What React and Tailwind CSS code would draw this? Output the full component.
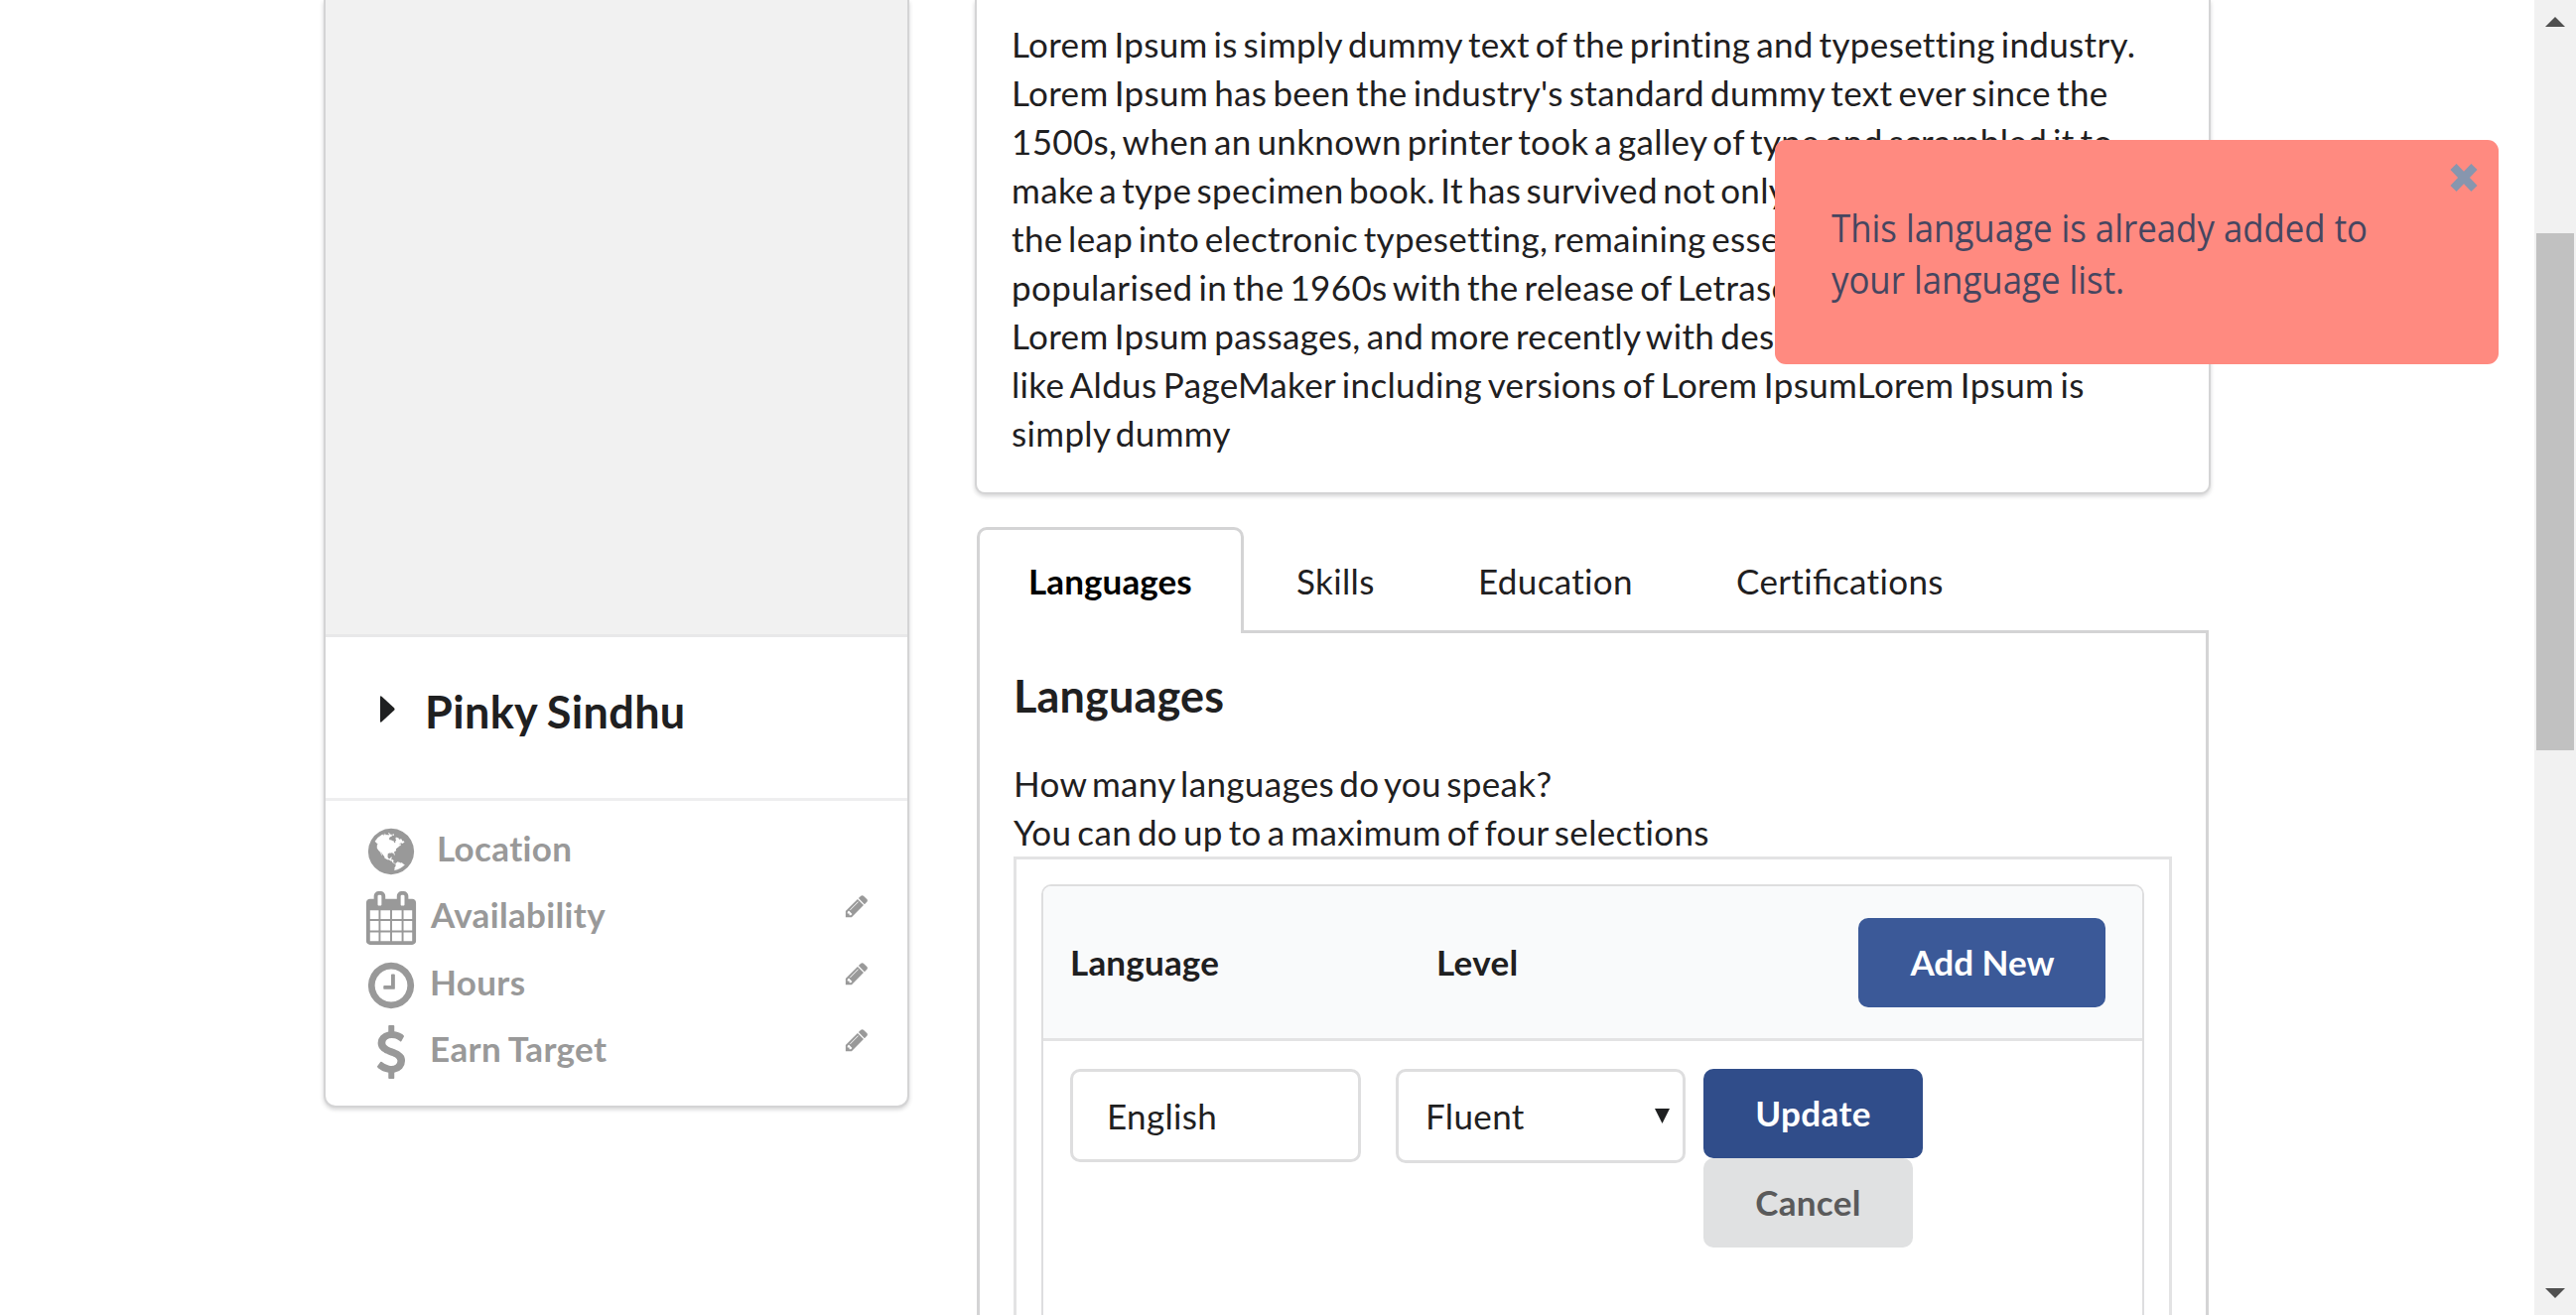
import React from "react";

const PATHS = {
  globe:
    "M896 128q209 0 385.5 103t279.5 279.5 103 385.5-103 385.5-279.5 279.5-385.5 103-385.5-103-279.5-279.5-103-385.5 103-385.5 279.5-279.5 385.5-103zm274 521q-2 1-9.5 9.5t-13.5 9.5q2 0 4.5-5t5-11 3.5-7q6-7 22-15 14-6 52-12 34-8 51 11-2-2 9.5-13t14.5-12q3-2 15-4.5t15-7.5l2-22q-12 1-17.5-7t-6.5-21q0 2-6 8 0-7-4.5-8t-11.5 1-9 1q-10-3-15-7.5t-8-16.5-4-15q-2-5-9.5-11t-9.5-10q-1-2-2.5-5.5t-3-6.5-4-5.5-5.5-2.5-7 5-7.5 10-4.5 5q-3-2-6-1.5t-4.5 1-4.5 3-5 3.5q-3 2-8.5 3t-8.5 2q15-5-1-11-10-4-16-3 9-4 7.5-12t-8.5-14h5q-1-4-8.5-8.5t-17.5-8.5-13-6q-8-5-34-9.5t-33-.5q-5 6-4.5 10.5t4 14 3.5 12.5q1 6-5.5 13t-6.5 12q0 7 14 15.5t10 21.5q-3 8-16 16t-16 12q-5 8-1.5 18.5t10.5 16.5q2 2 1.5 4t-3.5 4.5-5.5 4-6.5 3.5l-3 2q-11 5-20.5-6t-13.5-26q-7-25-16-30-23-8-29 1-5-13-41-26-25-9-58-4 6-1 0-15-7-15-19-12 3-6 4-17.5t1-13.5q3-13 12-23 1-1 7-8.5t9.5-13.5.5-6q35 4 50-11 5-5 11.5-17t10.5-17q9-6 14-5.5t14.5 5.5 14.5 5q14 1 15.5-11t-7.5-20q12 1 3-17-4-7-8-9-12-4-27 5-8 4 2 8-1-1-9.5 10.5t-16.5 17.5-16-5q-1-1-5.5-13.5t-9.5-13.5q-8 0-16 15 3-8-11-15t-24-8q19-12-8-27-7-4-20.5-5t-19.5 4q-5 7-5.5 11.5t5 8 10.5 5.5 11.5 4 8.5 3q14 10 8 14-2 1-8.5 3.5t-11.5 4.5-6 4q-3 4 0 14t-2 14q-5-5-9-17.5t-7-16.5q7 9-25 6l-10-1q-4 0-16 2t-20.5 1-13.5-8q-4-8 0-20 1-4 4-2-4-3-11-9.5t-10-8.5q-46 15-94 41 6 1 12-1 5-2 13-6.5t10-5.5q34-14 42-7l5-5q14 16 20 25-7-4-30-1-20 6-22 12 7 12 5 18-4-3-11.5-10t-14.5-11-15-5q-16 0-22 1-146 80-235 222 7 7 12 8 4 1 5 9t2.5 11 11.5-3q9 8 3 19 1-1 44 27 19 17 21 21 3 11-10 18-1-2-9-9t-9-4q-3 5 .5 18.5t10.5 12.5q-7 0-9.5 16t-2.5 35.5-1 23.5l2 1q-3 12 5.5 34.5t21.5 19.5q-13 3 20 43 6 8 8 9 3 2 12 7.5t15 10 10 10.5q4 5 10 22.5t14 23.5q-2 6 9.5 20t10.5 23q-1 0-2.5 1t-2.5 1q3 7 15.5 14t15.5 13q1 3 2 10t3 11 8 2q2-20-24-62-15-25-17-29-3-5-5.5-15.5t-4.5-14.5q2 0 6 1.5t8.5 3.5 7.5 4 2 3q-3 7 2 17.5t12 18.5 17 19 12 13q6 6 14 19.5t0 13.5q9 0 20 10.5t17 19.5q5 8 8 26t5 24q2 7 8.5 13.5t12.5 9.5l16 8 13 7q5 2 18.5 10.5t21.5 11.5q10 4 16 4t14.5-2.5 13.5-3.5q15-2 29 15t21 21q36 19 55 11-2 1 .5 7.5t8 15.5 9 14.5 5.5 8.5q5 6 18 15t18 15q6-4 7-9-3 8 7 20t18 10q14-3 14-32-31 15-49-18 0-1-2.5-5.5t-4-8.5-2.5-8.5 0-7.5 5-3q9 0 10-3.5t-2-12.5-4-13q-1-8-11-20t-12-15q-5 9-16 8t-16-9q0 1-1.5 5.5t-1.5 6.5q-13 0-15-1 1-3 2.5-17.5t3.5-22.5q1-4 5.5-12t7.5-14.5 4-12.5-4.5-9.5-17.5-2.5q-19 1-26 20-1 3-3 10.5t-5 11.5-9 7q-7 3-24 2t-24-5q-13-8-22.5-29t-9.5-37q0-10 2.5-26.5t3-25-5.5-24.5q3-2 9-9.5t10-10.5q2-1 4.5-1.5t4.5 0 4-1.5 3-6q-1-1-4-3-3-3-4-3 7 3 28.5-1.5t27.5 1.5q15 11 22-2 0-1-2.5-9.5t-.5-13.5q5 27 29 9 3 3 15.5 5t17.5 5q3 2 7 5.5t5.5 4.5 5-.5 8.5-6.5q10 14 12 24 11 40 19 44 7 3 11 2t4.5-9.5 0-14-1.5-12.5l-1-8v-18l-1-8q-15-3-18.5-12t1.5-18.5 15-18.5q1-1 8-3.5t15.5-6.5 12.5-8q21-19 15-35 7 0 11-9-1 0-5-3t-7.5-5-4.5-2q9-5 2-16 5-3 7.5-11t7.5-10q9 12 21 2 8-8 1-16 5-7 20.5-10.5t18.5-9.5q7 2 8-2t1-12 3-12q4-5 15-9t13-5l17-11q3-4 0-4 18 2 31-11 10-11-6-20 3-6-3-9.5t-15-5.5q3-1 11.5-.5t10.5-1.5q15-10-7-16-17-5-43 12zm-163 877q206-36 351-189-3-3-12.5-4.5t-12.5-3.5q-18-7-24-8 1-7-2.5-13t-8-9-12.5-8-11-7q-2-2-7-6t-7-5.5-7.5-4.5-8.5-2-10 1l-3 1q-3 1-5.5 2.5t-5.5 3-4 3 0 2.5q-21-17-36-22-5-1-11-5.5t-10.5-7-10-1.5-11.5 7q-5 5-6 15t-2 13q-7-5 0-17.5t2-18.5q-3-6-10.5-4.5t-12 4.5-11.5 8.5-9 6.5-8.5 5.5-8.5 7.5q-3 4-6 12t-5 11q-2-4-11.5-6.5t-9.5-5.5q2 10 4 35t5 38q7 31-12 48-27 25-29 40-4 22 12 26 0 7-8 20.5t-7 21.5q0 6 2 16z",
  calendar:
    "M192 1664h288v-288h-288v288zm352 0h320v-288h-320v288zm-352-352h288v-320h-288v320zm352 0h320v-320h-320v320zm-352-384h288v-288h-288v288zm736 736h320v-288h-320v288zm-384-736h320v-288h-320v288zm768 736h288v-288h-288v288zm-384-352h320v-320h-320v320zm-352-864v-288q0-13-9.5-22.5t-22.5-9.5h-64q-13 0-22.5 9.5t-9.5 22.5v288q0 13 9.5 22.5t22.5 9.5h64q13 0 22.5-9.5t9.5-22.5zm736 864h288v-320h-288v320zm-384-384h320v-288h-320v288zm384 0h288v-288h-288v288zm32-480v-288q0-13-9.5-22.5t-22.5-9.5h-64q-13 0-22.5 9.5t-9.5 22.5v288q0 13 9.5 22.5t22.5 9.5h64q13 0 22.5-9.5t9.5-22.5zm384-64v1280q0 52-38 90t-90 38h-1408q-52 0-90-38t-38-90v-1280q0-52 38-90t90-38h128v-96q0-66 47-113t113-47h64q66 0 113 47t47 113v96h384v-96q0-66 47-113t113-47h64q66 0 113 47t47 113v96h128q52 0 90 38t38 90z",
  clock:
    "M1024 544v448q0 14-9 23t-23 9h-320q-14 0-23-9t-9-23v-64q0-14 9-23t23-9h224v-352q0-14 9-23t23-9h64q14 0 23 9t9 23zm416 352q0-148-73-273t-198-198-273-73-273 73-198 198-73 273 73 273 198 198 273 73 273-73 198-198 73-273zm224 0q0 209-103 385.5t-279.5 279.5-385.5 103-385.5-103-279.5-279.5-103-385.5 103-385.5 279.5-279.5 385.5-103 385.5 103 279.5 279.5 103 385.5z",
  dollar:
    "M1362 1185q0 153-99.5 263.5t-258.5 136.5v175q0 14-9 23t-23 9h-135q-13 0-22.5-9.5t-9.5-22.5v-175q-66-9-127.5-31t-101.5-44.5-74-48-46.5-37.5-17.5-18q-17-21-2-41l103-135q7-10 23-12 15-2 24 9l2 2q113 99 243 125 37 8 74 8 81 0 142.5-43t61.5-122q0-28-15-53t-33.5-42-58.5-37.5-66-32-80-32.5q-39-16-61.5-25t-61.5-26.5-62.5-31-56.5-35.5-53.5-42.5-43.5-49-35.5-58-21-66.5-8.5-78q0-138 98-242t255-134v-180q0-13 9.5-22.5t22.5-9.5h135q14 0 23 9t9 23v176q57 6 110.5 23t87 33.5 63.5 37.5 39 29 15 14q17 18 5 38l-81 146q-8 15-23 16-14 3-27-7-3-3-14.5-12t-39-26.5-58.5-32-74.5-26-85.5-11.5q-95 0-155 43t-60 111q0 26 8.5 48t29.5 41.5 39.5 33 56 31 60.5 27 70 27.5q53 20 81 31.5t76 35 75.5 42.5 62 50 53 63.5 31.5 76.5 13 94z",
  pencil:
    "M491 1536l91-91-235-235-91 91v107h128v128h107zm523-928q0-22-22-22-10 0-17 7l-542 542q-7 7-7 17 0 22 22 22 10 0 17-7l542-542q7-7 7-17zm-54-192l416 416-832 832h-416v-416zm683 96q0 53-37 90l-166 166-416-416 166-165q36-38 90-38 53 0 91 38l235 234q37 39 37 91z",
};

function Icon({ name, className }) {
  return (
    <svg viewBox="0 0 1792 1792" fill="currentColor" className={className}>
      <path d={PATHS[name]} />
    </svg>
  );
}

const DETAILS = [
  { icon: "globe", label: "Location", gap: "ml-[19px]", editable: false },
  { icon: "calendar", label: "Availability", gap: "ml-[13px]", editable: true },
  { icon: "clock", label: "Hours", gap: "ml-[12px]", editable: true },
  { icon: "dollar", label: "Earn Target", gap: "ml-[12px]", editable: true },
];

const ABOUT = [
  { text: "Lorem Ipsum is simply dummy text of the printing and typesetting industry.", spacing: "[word-spacing:-3.5px]" },
  { text: "Lorem Ipsum has been the industry's standard dummy text ever since the", spacing: "[word-spacing:-3.2px]" },
  { text: "1500s, when an unknown printer took a galley of type and scrambled it to", spacing: "[word-spacing:-3.4px]" },
  { text: "make a type specimen book. It has survived not only five centuries, but also", spacing: "[word-spacing:-4px]" },
  { text: "the leap into electronic typesetting, remaining essentially unchanged. It was", spacing: "[word-spacing:-3.8px]" },
  { text: "popularised in the 1960s with the release of Letraset sheets containing", spacing: "[word-spacing:-3.4px]" },
  { text: "Lorem Ipsum passages, and more recently with desktop publishing software", spacing: "[word-spacing:-3.2px]" },
  { text: "like Aldus PageMaker including versions of Lorem IpsumLorem Ipsum is", spacing: "[word-spacing:-2.9px]" },
  { text: "simply dummy", spacing: "[word-spacing:-4px]" },
];

function ProfileCard() {
  return (
    <aside className="ml-[326px] flex h-[1116px] w-[590px] shrink-0 flex-col overflow-hidden rounded-b-[12px] border-2 border-t-0 border-[#d4d4d5] bg-white shadow-[0_2px_4px_#d4d4d5]">
      <div className="h-[639px] shrink-0 bg-[#f1f1f1]" />
      <div className="flex h-[168px] shrink-0 border-y-[3px] border-t-[#e8e8e9] border-b-[#eeeeef] pt-[46px] pl-[55px]">
        <svg viewBox="0 0 15 27" className="mt-[13px] h-[27px] w-[15px] fill-[#1f2021]">
          <path d="M0 1.5Q0 -.5 1.5 .8L14 12.2Q15.2 13.5 14 14.8L1.5 26.2Q0 27.5 0 25.5Z" />
        </svg>
        <h2 className="ml-[30px] text-[45px] leading-[58px] font-bold [word-spacing:-1.5px]">Pinky Sindhu</h2>
      </div>
      <div className="pt-[23px] pr-[38px] pl-[39px] font-bold text-[#999] [word-spacing:-1px]">
        {DETAILS.map((d) => (
          <div key={d.label} className="flex h-[67.4px] items-start">
            <Icon name={d.icon} className="mt-[1px] size-[54px] shrink-0" />
            <span className={d.gap}>{d.label}</span>
            {d.editable && <Icon name="pencil" className="mt-[3px] ml-auto size-[26px]" />}
          </div>
        ))}
      </div>
    </aside>
  );
}

function Tabs() {
  return (
    <nav className="relative ml-[2px] flex h-[107px] text-[#1f2021]">
      <div className="z-10 h-[107px] w-[269px] rounded-t-[10px] border-x-[3px] border-t-[3px] border-[#d4d4d5] bg-white pt-[27px] pl-[49px] font-bold tracking-[0.1px] text-black">
        Languages
      </div>
      <div className="w-[184px] pt-[30px] pl-[53px]">Skills</div>
      <div className="w-[260px] pt-[30px] pl-[52px]">Education</div>
      <div className="pt-[30px] pl-[52px]">
        Certi<span className="tracking-normal [font-variant-ligatures:common-ligatures]">fi</span>cations
      </div>
    </nav>
  );
}

function LanguagesPanel() {
  return (
    <section className="-mt-[3px] ml-[2px] h-[690px] w-[1241px] border-x-[3px] border-[#d4d4d5] bg-white">
      <div className="flex">
        <div className="w-[263px]" />
        <div className="h-[3px] flex-1 bg-[#d4d4d5]" />
      </div>
      <div className="pr-[34.5px] pl-[34px]">
        <h3 className="pt-[34px] text-[45px] leading-[58px] font-bold tracking-[0.15px]">Languages</h3>
        <p className="mt-[35px]">
          How many languages do you speak?
          <br />
          <span className="[word-spacing:-3.4px]">You can do up to a maximum of four selections</span>
        </p>
        <div className="h-[480px] border-[3px] border-[#e3e3e4] px-[25px] pt-[25px]">
          <div className="h-[452px] rounded-t-[10px] border-2 border-[#dededf] bg-white">
            <div className="flex h-[156px] items-start rounded-t-[8px] border-b-[3px] border-[#e3e3e4] bg-[#f9fafb] pr-[37px] font-bold">
              <div className="w-[369px] pt-[52px] pl-[27px] tracking-[0.2px]">Language</div>
              <div className="pt-[52px] pl-[27px]">Level</div>
              <button className="mt-[32px] ml-auto h-[90px] w-[249px] rounded-[10px] bg-[#3b5998] pb-[2px] pl-[2px] tracking-normal text-white">
                Add New
              </button>
            </div>
            <div className="flex items-start pt-[28px] pl-[27px]">
              <div className="h-[94px] w-[293px] rounded-[10px] border-[3px] border-[#dededf] pt-[20px] pl-[34px]">English</div>
              <div className="ml-[35px] flex h-[95px] w-[292px] items-start justify-between rounded-[10px] border-[3px] border-[#dededf] pt-[20px] pr-[13px] pl-[27px]">
                Fluent
                <svg viewBox="0 0 15 15" className="mt-[17px] size-[15px] fill-[#1f2021]">
                  <path d="M0 0H15L7.5 15Z" />
                </svg>
              </div>
              <div className="ml-[18px] flex flex-col items-start font-bold">
                <button className="h-[90px] w-[221px] rounded-[10px] bg-[#304d8a] pb-[2px] text-white">Update</button>
                <button className="h-[90px] w-[211px] rounded-[10px] bg-[#e0e1e2] pb-[2px] text-[#5a5a5b]">Cancel</button>
              </div>
            </div>
          </div>
        </div>
      </div>
    </section>
  );
}

function Toast() {
  return (
    <div className="absolute top-[141px] left-[1788px] h-[226px] w-[729px] rounded-[11px] bg-[#ff8a80] pt-[62px] pl-[57px]">
      <p className="w-[660px] origin-left scale-x-[0.904] font-['Open_Sans',sans-serif] text-[38.5px] leading-[52px] tracking-normal text-[#464660] [word-spacing:0px]">
        This language is already added to
        <br />
        your language list.
      </p>
      <svg viewBox="0 0 28 30" className="absolute top-[23px] right-[21px] h-[30px] w-[28px] stroke-[#8796ae]">
        <path d="M3.5 4L24.5 26M24.5 4L3.5 26" strokeWidth="8.5" />
      </svg>
    </div>
  );
}

function Scrollbar() {
  return (
    <div className="ml-auto flex h-full w-[42px] flex-col items-center bg-[#f1f1f1]">
      <svg viewBox="0 0 20 10" className="mt-[17px] h-[10px] w-[20px] fill-[#505050]">
        <path d="M0 10L10 0L20 10Z" />
      </svg>
      <div className="mt-[208px] h-[521px] w-[38px] bg-[#c1c1c1]" />
      <svg viewBox="0 0 20 10" className="mt-auto mb-[17px] h-[10px] w-[20px] fill-[#505050]">
        <path d="M0 0L10 10L20 0Z" />
      </svg>
    </div>
  );
}

export default function App() {
  return (
    <div className="relative flex h-[1325px] w-[2595px] items-start overflow-hidden bg-white font-[Lato,sans-serif] text-[35px] leading-[49px] tracking-[0.35px] text-[#1f2021] [font-variant-ligatures:no-common-ligatures] [word-spacing:-4px]">
      <ProfileCard />
      <main className="ml-[66px] w-[1245px] shrink-0">
        <section className="h-[498px] rounded-b-[10px] border-2 border-t-0 border-[#d4d4d5] bg-white pt-[20px] pl-[35px] whitespace-nowrap shadow-[0_2px_4px_#d4d4d5]">
          {ABOUT.map((line) => (
            <div key={line.text} className={line.spacing}>
              {line.text}
            </div>
          ))}
        </section>
        <div className="h-[33px]" />
        <Tabs />
        <LanguagesPanel />
      </main>
      <Scrollbar />
      <Toast />
    </div>
  );
}
